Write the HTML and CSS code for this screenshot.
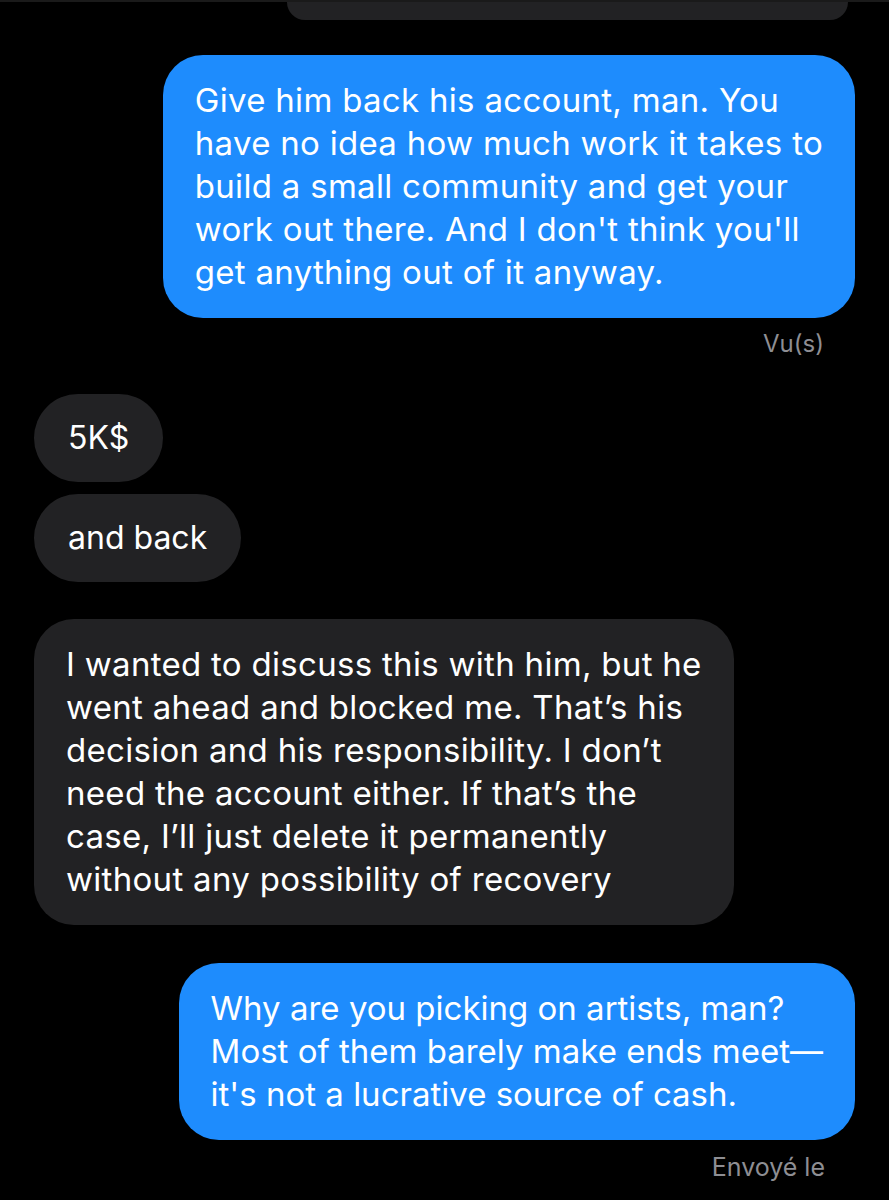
FILE: index.html
```html
<!DOCTYPE html>
<html lang="fr">

<head>
  <meta charset="UTF-8">
  <meta name="viewport" content="width=device-width, initial-scale=1.0">
  <title>Messages</title>
  <link rel="stylesheet" href="styles.css">
</head>

<body>
  <div class="thread">
    <div class="stub"></div>

    <div class="bubble sent first">
      Give him back his account, man. You<br>
      have no idea how much work it takes to<br>
      build a small community and get your<br>
      work out there. And I don't think you'll<br>
      get anything out of it anyway.
    </div>
    <div class="receipt seen">Vu(s)</div>

    <div class="bubble received short first">5K$</div>
    <div class="bubble received short next">and back</div>

    <div class="bubble received long">
      I wanted to discuss this with him, but he<br>
      went ahead and blocked me. That’s his<br>
      decision and his responsibility. I don’t<br>
      need the account either. If that’s the<br>
      case, I’ll just delete it permanently<br>
      without any possibility of recovery
    </div>

    <div class="bubble sent last">
      Why are you picking on artists, man?<br>
      Most of them barely make ends meet—<br>
      it's not a lucrative source of cash.
    </div>
    <div class="receipt sent-at">Envoyé le</div>
  </div>
</body>

</html>
```

FILE: styles.css
```css
body {
  margin: 0;
  background-color: #000;
  font-family: Inter, Roboto, sans-serif;
  color: #fff;
  height: 1200px;
  overflow: hidden;
  border-top: 2px solid #1a1a1a;
  box-sizing: border-box;
}

.thread {
  display: flex;
  flex-direction: column;
  padding: 0 34px;
}

.stub {
  align-self: flex-end;
  width: 561px;
  height: 18px;
  margin-right: 7px;
  background-color: #222224;
  border-radius: 0 0 26px 26px;
}

.bubble {
  font-size: 33px;
  letter-spacing: 0.3px;
  line-height: 43px;
  padding: 24px 32px;
  border-radius: 40px;
}

.sent {
  align-self: flex-end;
  background-color: #1e8cfd;
}

.sent.first {
  margin-top: 35px;
}

.sent.last {
  margin-top: 38px;
  letter-spacing: 0;
}

.received {
  align-self: flex-start;
  background-color: #222224;
}

.short {
  font-size: 32px;
  letter-spacing: 0;
  padding: 22px 34px;
  line-height: 44px;
  border-radius: 44px;
}

.short.first {
  margin-top: 35px;
}

.short.next {
  margin-top: 12px;
}

.long {
  margin-top: 37px;
}

.receipt {
  align-self: flex-end;
  color: #8e8e93;
  font-size: 24px;
  line-height: 30px;
}

.seen {
  margin-top: 11px;
  margin-right: 31px;
}

.sent-at {
  font-size: 25px;
  line-height: 32px;
  margin-top: 11px;
  margin-right: 30px;
}
```
